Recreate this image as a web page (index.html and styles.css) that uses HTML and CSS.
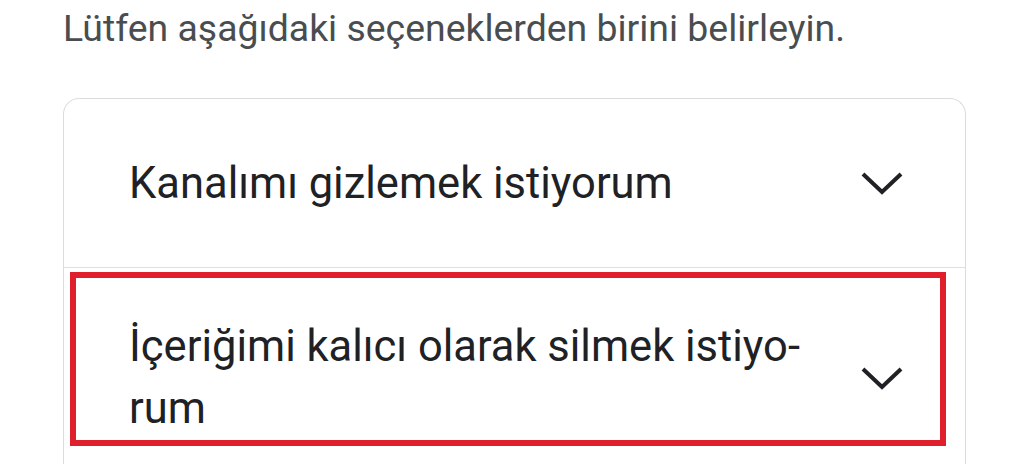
FILE: index.html
```html
<!DOCTYPE html>
<html lang="tr">
<head>
<meta charset="utf-8">
<link rel="stylesheet" href="styles.css">
</head>
<body>
<div class="page">
  <p class="intro">Lütfen aşağıdaki seçeneklerden birini belirleyin.</p>
  <div class="card">
    <div class="row row-first">
      <span class="label">Kanalımı gizlemek istiyorum</span>
      <svg class="chev" viewBox="0 0 42 24" width="42" height="24"><path d="M2 3 L21 21 L40 3" fill="none" stroke="#202124" stroke-width="4"/></svg>
    </div>
    <div class="row row-second">
      <span class="label">İçeriğimi kalıcı olarak silmek istiyo-<br>rum</span>
      <svg class="chev" viewBox="0 0 42 24" width="42" height="24"><path d="M2 3 L21 21 L40 3" fill="none" stroke="#202124" stroke-width="4"/></svg>
      <div class="highlight"></div>
    </div>
  </div>
</div>
</body>
</html>
```
FILE: styles.css
```css
html, body {
  margin: 0;
  padding: 0;
  background: #ffffff;
}
.page {
  width: 1024px;
  height: 464px;
  overflow: hidden;
  font-family: Roboto, "Noto Sans", sans-serif;
}
.intro {
  margin: 0;
  padding: 4px 0 0 63px;
  font-size: 37.4px;
  line-height: 48px;
  color: #4a4d50;
  font-weight: 400;
}
.card {
  margin: 46px 0 0 63px;
  width: 901px;
  height: 400px;
  border: 1.5px solid #dcdcdc;
  border-bottom: none;
  border-radius: 16px 16px 0 0;
}
.row {
  display: flex;
  align-items: center;
  justify-content: space-between;
  padding: 0 62px 0 65px;
  color: #202124;
  font-size: 43.5px;
}
.row-first {
  height: 168px;
  border-bottom: 1.5px solid #e0e0e0;
}
.row-second {
  position: relative;
  line-height: 62px;
  padding-top: 48px;
  padding-bottom: 20px;
}
.chev {
  flex: none;
  display: block;
}
.highlight {
  position: absolute;
  left: 6px;
  top: 4px;
  width: 864px;
  height: 162px;
  border: 6.5px solid #e01f2c;
}
```
